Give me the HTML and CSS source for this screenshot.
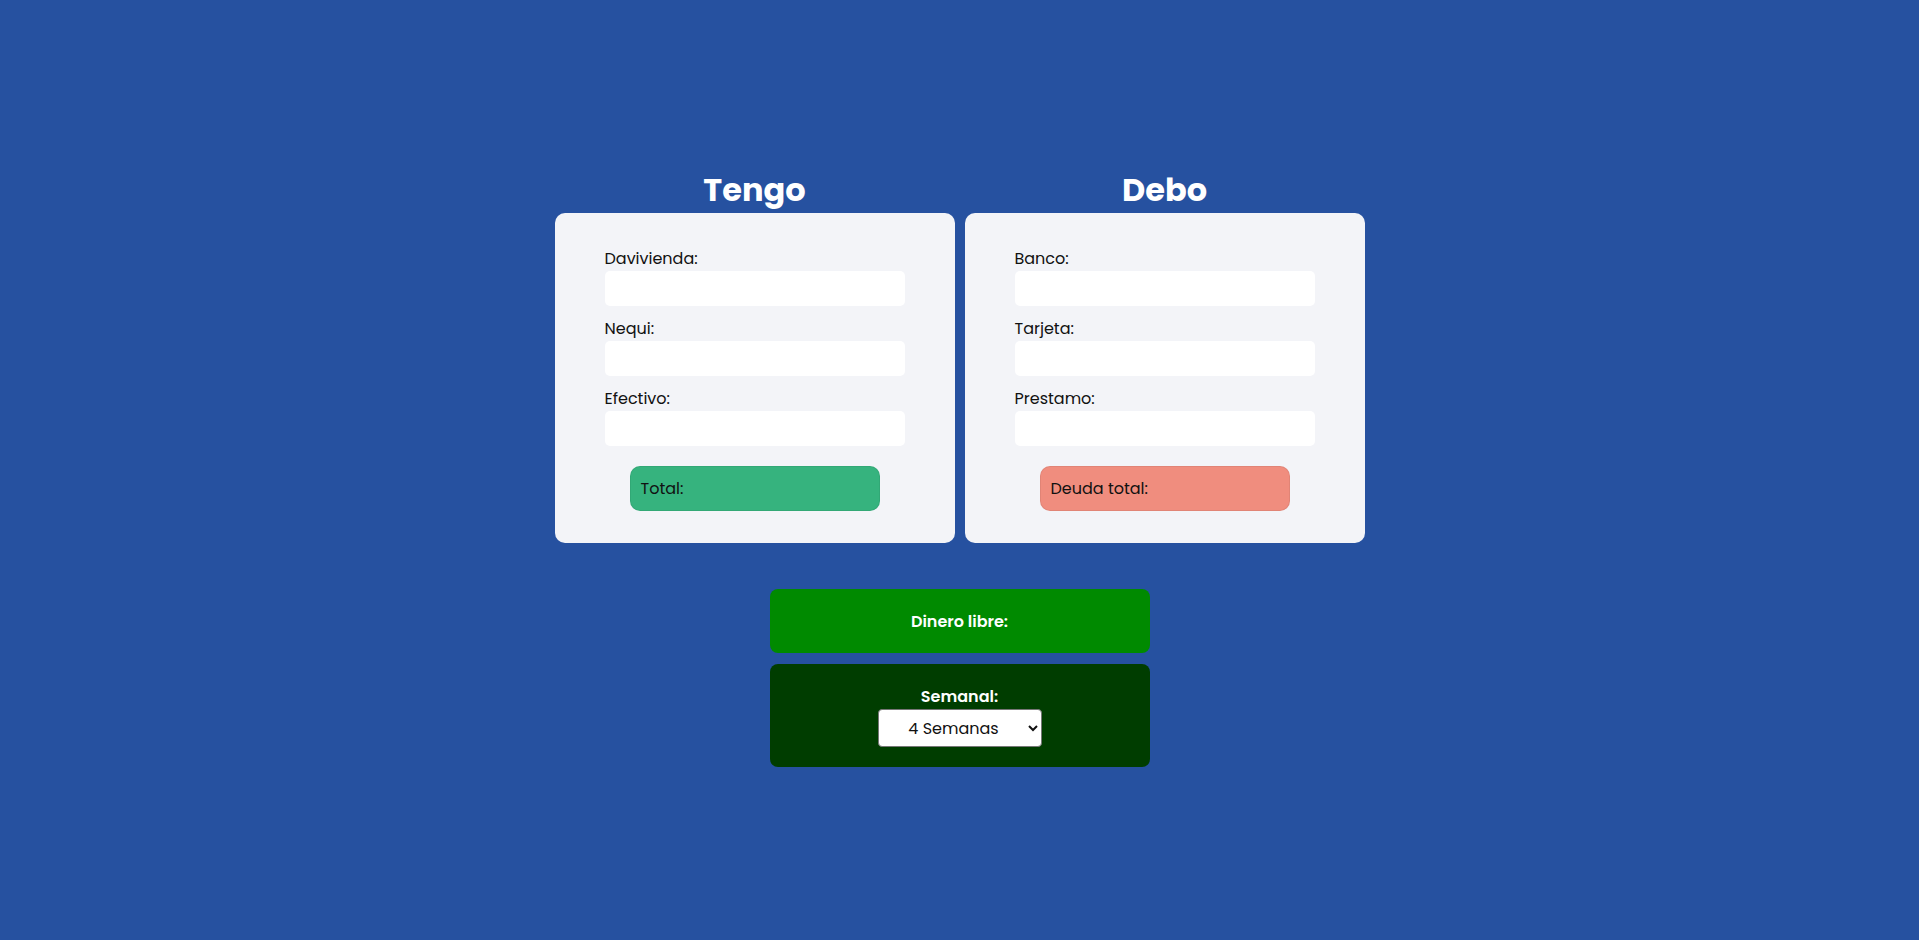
FILE: index.html
```html
<!DOCTYPE html>
<html lang="es">
<head>
<meta charset="utf-8">
<title>Finanzas</title>
<link rel="stylesheet" href="styles.css">
</head>
<body>
<main class="page">
  <section class="columns">
    <div class="col">
      <h2 class="col-title">Tengo</h2>
      <div class="card">
        <div class="field"><label>Davivienda:</label><input type="text"></div>
        <div class="field"><label>Nequi:</label><input type="text"></div>
        <div class="field"><label>Efectivo:</label><input type="text"></div>
        <div class="total total-have">Total:</div>
      </div>
    </div>
    <div class="col">
      <h2 class="col-title">Debo</h2>
      <div class="card">
        <div class="field"><label>Banco:</label><input type="text"></div>
        <div class="field"><label>Tarjeta:</label><input type="text"></div>
        <div class="field"><label>Prestamo:</label><input type="text"></div>
        <div class="total total-owe">Deuda total:</div>
      </div>
    </div>
  </section>
  <div class="free">Dinero libre:</div>
  <div class="weekly">
    <span class="weekly-label">Semanal:</span>
    <select class="weeks">
      <option>4 Semanas</option>
      <option>3 Semanas</option>
      <option>2 Semanas</option>
      <option>1 Semana</option>
    </select>
  </div>
</main>
</body>
</html>
```
FILE: styles.css
```css
html, body {
  margin: 0;
  padding: 0;
}
body {
  background: #2651a0;
  min-height: 940px;
  font-family: "Poppins", "Inter", "Open Sans", sans-serif;
  font-size: 16px;
  color: #111;
}
.page {
  display: flex;
  flex-direction: column;
  align-items: center;
  padding-top: 171px;
}
.columns {
  display: flex;
  gap: 10px;
}
.col {
  width: 400px;
  display: flex;
  flex-direction: column;
  align-items: center;
}
.col-title {
  margin: 0;
  padding-bottom: 4px;
  font-size: 32px;
  line-height: 38px;
  font-weight: 700;
  color: #fff;
}
.card {
  width: 400px;
  box-sizing: border-box;
  background: #f3f4f8;
  border-radius: 10px;
  padding: 34px 50px 32px;
  display: flex;
  flex-direction: column;
}
.field {
  display: flex;
  flex-direction: column;
  margin-bottom: 11px;
}
.field:nth-child(3) {
  margin-bottom: 0;
}
.field label {
  line-height: 24px;
  font-size: 16px;
  color: #111;
}
.field input {
  width: 300px;
  height: 35px;
  box-sizing: border-box;
  border: none;
  border-radius: 5px;
  background: #fff;
  padding: 0 8px;
  font: inherit;
}
.total {
  width: 250px;
  height: 45px;
  box-sizing: border-box;
  margin: 20px auto 0;
  border-radius: 10px;
  padding-left: 10px;
  display: flex;
  align-items: center;
  border: 1px solid rgba(0, 0, 0, 0.06);
  font-size: 16px;
  color: #111;
}
.total-have {
  background: #36b37e;
}
.total-owe {
  background: #f08d7e;
}
.free {
  margin-top: 46px;
  width: 380px;
  height: 64px;
  border-radius: 8px;
  background: #008a00;
  color: #fff;
  font-weight: 600;
  display: flex;
  align-items: center;
  justify-content: center;
}
.weekly {
  margin-top: 11px;
  width: 380px;
  height: 103px;
  box-sizing: border-box;
  padding-top: 21px;
  border-radius: 8px;
  background: #003d00;
  display: flex;
  flex-direction: column;
  align-items: center;
}
.weekly-label {
  color: #fff;
  font-weight: 600;
  line-height: 24px;
}
.weeks {
  width: 164px;
  height: 38px;
  border: 1px solid #767676;
  border-radius: 4px;
  background: #fff;
  font: inherit;
  font-size: 16px;
  color: #111;
  text-align: center;
  text-align-last: center;
}
```
